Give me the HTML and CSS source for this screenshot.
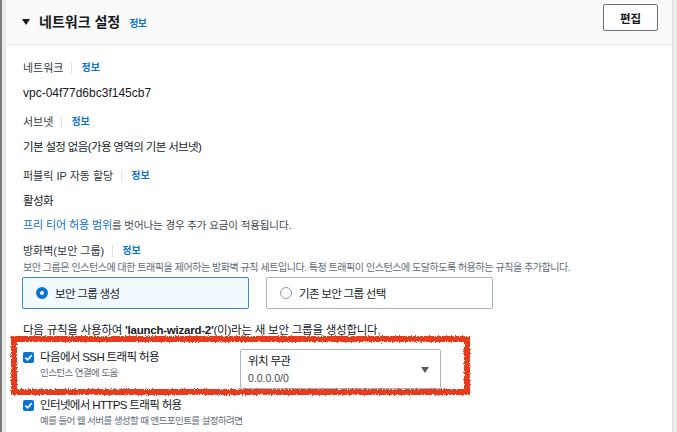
FILE: index.html
```html
<!DOCTYPE html>
<html lang="ko">
<head>
    <meta charset="UTF-8">
    <meta name="viewport" content="width=device-width, initial-scale=1.0">
    <title>네트워크 설정</title>
    <link rel="stylesheet" href="styles.css">
</head>
<body>
    <!-- rough edge for the hand-drawn marker -->
    <svg class="defs" aria-hidden="true">
        <filter id="rough">
            <feTurbulence type="fractalNoise" baseFrequency="0.7" numOctaves="2" seed="3" result="noise"/>
            <feDisplacementMap in="SourceGraphic" in2="noise" scale="4"/>
        </filter>
    </svg>

    <section class="panel">
        <!-- Header -->
        <header class="panel-head">
            <div class="head-title">
                <span class="caret"></span>
                <h2>네트워크 설정</h2>
                <a class="info" href="#">정보</a>
            </div>
            <button class="btn">편집</button>
        </header>

        <div class="panel-body">
            <div class="field">
                <div class="label">네트워크<span class="sep"></span><a class="info" href="#">정보</a></div>
                <div class="value latin">vpc-04f77d6bc3f145cb7</div>
            </div>

            <div class="field">
                <div class="label">서브넷<span class="sep"></span><a class="info" href="#">정보</a></div>
                <div class="value">기본 설정 없음(가용 영역의 기본 서브넷)</div>
            </div>

            <div class="field public-ip">
                <div class="label">퍼블릭 IP 자동 할당<span class="sep"></span><a class="info" href="#">정보</a></div>
                <div class="value">활성화</div>
                <div class="note"><a href="#">프리 티어 허용 범위</a>를 벗어나는 경우 추가 요금이 적용됩니다.</div>
            </div>

            <div class="field firewall">
                <div class="label">방화벽(보안 그룹)<span class="sep"></span><a class="info" href="#">정보</a></div>
                <div class="desc">보안 그룹은 인스턴스에 대한 트래픽을 제어하는 방화벽 규칙 세트입니다. 특정 트래픽이 인스턴스에 도달하도록 허용하는 규칙을 추가합니다.</div>
                <div class="tiles">
                    <div class="tile selected"><span class="radio"></span>보안 그룹 생성</div>
                    <div class="tile"><span class="radio"></span>기존 보안 그룹 선택</div>
                </div>
                <div class="rule-text">다음 규칙을 사용하여 <b>'launch-wizard-2'</b>(이)라는 새 보안 그룹을 생성합니다.</div>
            </div>

            <div class="rule-row marked">
                <div class="check-item">
                    <span class="checkbox">
                        <svg viewBox="0 0 12 12"><polyline points="2.5,6.2 5,8.6 9.6,3.4"/></svg>
                    </span>
                    <div>
                        <div class="check-label">다음에서 SSH 트래픽 허용</div>
                        <div class="check-sub">인스턴스 연결에 도움</div>
                    </div>
                </div>
                <div class="select">
                    <div>
                        <div class="select-value">위치 무관</div>
                        <div class="select-sub latin">0.0.0.0/0</div>
                    </div>
                    <span class="select-caret"></span>
                </div>
            </div>

            <div class="rule-row">
                <div class="check-item">
                    <span class="checkbox">
                        <svg viewBox="0 0 12 12"><polyline points="2.5,6.2 5,8.6 9.6,3.4"/></svg>
                    </span>
                    <div>
                        <div class="check-label">인터넷에서 HTTPS 트래픽 허용</div>
                        <div class="check-sub">예를 들어 웹 서버를 생성할 때 엔드포인트를 설정하려면</div>
                    </div>
                </div>
            </div>
        </div>
    </section>
</body>
</html>
```

FILE: styles.css
```css
* {
    margin: 0;
    padding: 0;
    box-sizing: border-box;
}

body {
    font-family: 'Liberation Sans', 'Noto Sans CJK KR', sans-serif;
    color: #16191f;
    background: #ececec;
    border-left: 2px solid #7b7b7b;
    padding-left: 3px;
    padding-right: 4px;
    height: 432px;
    overflow: hidden;
    letter-spacing: -0.04em;
}

.defs {
    position: absolute;
    width: 0;
    height: 0;
}

a {
    color: #0972d3;
    text-decoration: none;
}

.latin {
    letter-spacing: 0;
}

/* Panel */
.panel {
    background: #ffffff;
    border-left: 1px solid #e1e3e3;
    border-right: 1px solid #dcdede;
    height: 100%;
}

.panel-head {
    height: 45px;
    background: #fafafa;
    border-bottom: 1px solid #e9ebeb;
    display: flex;
    align-items: center;
    justify-content: space-between;
    padding: 0 14px 0 16px;
}

.head-title {
    display: flex;
    align-items: center;
}

.caret {
    width: 0;
    height: 0;
    border-left: 4.5px solid transparent;
    border-right: 4.5px solid transparent;
    border-top: 6px solid #16191f;
    margin-right: 9px;
}

.head-title h2 {
    font-size: 14px;
    font-weight: 700;
    line-height: 20px;
    margin-right: 9px;
    letter-spacing: 0;
}

.info {
    font-size: 10px;
    font-weight: 700;
}

.btn {
    width: 55px;
    height: 27px;
    margin-top: -9px;
    background: #ffffff;
    border: 1px solid #687078;
    border-radius: 2px;
    font-family: inherit;
    font-size: 11.5px;
    font-weight: 700;
    color: #16191f;
}

/* Body */
.panel-body {
    padding: 14px 17px 0 17px;
}

.field {
    margin-bottom: 10px;
}

.field.public-ip {
    margin-bottom: 8px;
}

.label {
    display: flex;
    align-items: center;
    font-size: 11px;
    line-height: 18px;
    color: #2f3640;
    margin-bottom: 6px;
    letter-spacing: 0;
}

.sep {
    width: 1px;
    height: 12px;
    background: #dfe2e2;
    margin: 0 9px 0 8px;
}

.value {
    font-size: 11.5px;
    line-height: 20px;
}

.value.latin {
    font-size: 12px;
}

.note {
    font-size: 10.5px;
    line-height: 18px;
    margin-top: 5px;
    color: #414750;
    letter-spacing: -0.01em;
}

.note a {
    font-size: 11px;
}

/* Firewall */
.firewall .label {
    margin-bottom: 1px;
}

.desc {
    font-size: 10px;
    line-height: 14px;
    color: #5f6b7a;
    white-space: nowrap;
    letter-spacing: -0.045em;
}

.tiles {
    display: flex;
    gap: 18px;
    margin-top: 2px;
}

.tile {
    width: 227px;
    height: 32px;
    display: flex;
    align-items: center;
    padding-left: 13px;
    border: 1px solid #aab7b8;
    border-radius: 2px;
    font-size: 11.5px;
    margin-left: -1px;
    letter-spacing: -0.06em;
}

.tile.selected {
    background: #f1faff;
    border-color: #3e84d1;
}

.radio {
    width: 12px;
    height: 12px;
    border-radius: 50%;
    border: 1px solid #8d99a8;
    background: #ffffff;
    margin-right: 7px;
    flex-shrink: 0;
}

.tile.selected .radio {
    border: 4px solid #0972d3;
}

.rule-text {
    font-size: 11.5px;
    line-height: 18px;
    margin-top: 12px;
    letter-spacing: -0.02em;
}

/* Rule rows */
.rule-row {
    display: grid;
    grid-template-columns: 217px 201px;
    width: 418px;
    margin-top: 8px;
}

.rule-row.marked {
    position: relative;
    margin-top: 10px;
}

.rule-row.marked::after {
    content: '';
    position: absolute;
    left: -12px;
    top: -13px;
    right: -29px;
    bottom: -6px;
    border: 6px solid #e63b1d;
    filter: url(#rough);
    pointer-events: none;
}

.check-item {
    display: flex;
    align-items: flex-start;
    white-space: nowrap;
}

.checkbox {
    width: 11px;
    height: 11px;
    margin-top: 3px;
    margin-right: 6px;
    background: #0972d3;
    border-radius: 2px;
    flex-shrink: 0;
    display: flex;
}

.checkbox svg {
    width: 11px;
    height: 11px;
    fill: none;
    stroke: #ffffff;
    stroke-width: 1.8;
}

.check-label {
    font-size: 11.5px;
    line-height: 16px;
    margin-bottom: 1px;
}

.check-sub {
    font-size: 9.5px;
    line-height: 14px;
    color: #5f6b7a;
    letter-spacing: -0.06em;
}

.select {
    height: 40px;
    display: flex;
    align-items: center;
    justify-content: space-between;
    padding: 0 11px 0 7px;
    border: 1px solid #aab7b8;
    border-radius: 2px;
}

.select-value {
    font-size: 11.5px;
    line-height: 17px;
}

.select-sub {
    font-size: 10.5px;
    line-height: 16px;
    color: #414750;
}

.select-caret {
    width: 0;
    height: 0;
    border-left: 4px solid transparent;
    border-right: 4px solid transparent;
    border-top: 6px solid #545b64;
    margin-top: 2px;
}
```
